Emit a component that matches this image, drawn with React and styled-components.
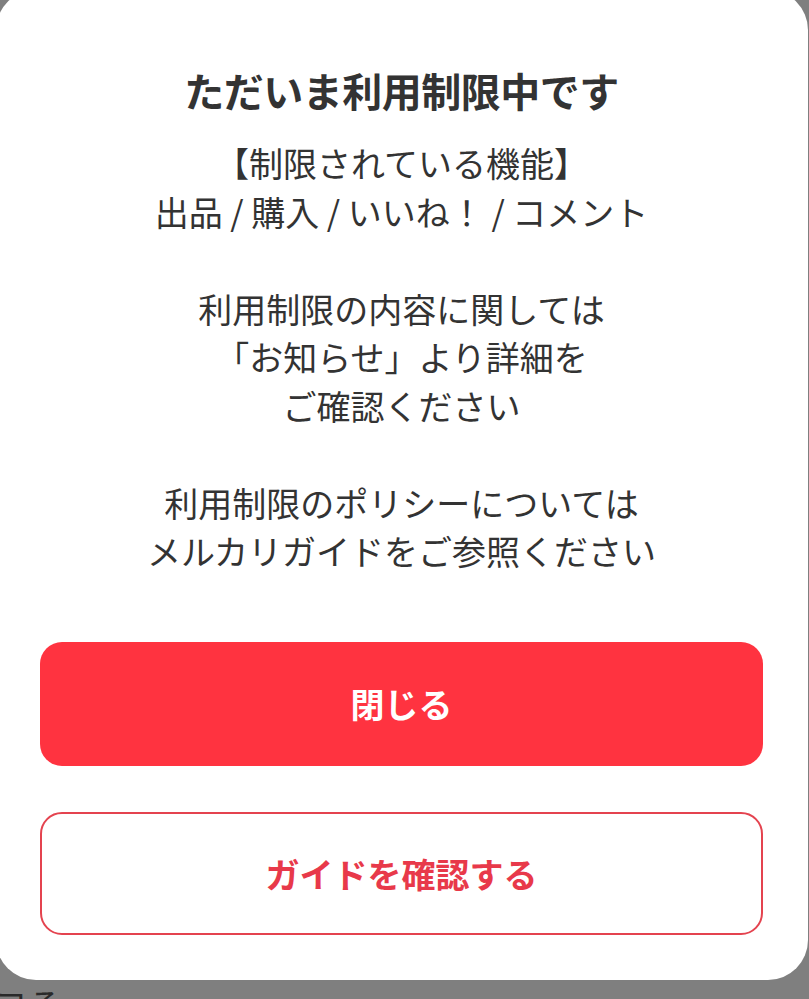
import React from "react";
import styled, { createGlobalStyle } from "styled-components";

const GlobalStyle = createGlobalStyle`
  html, body {
    margin: 0;
    padding: 0;
    height: 999px;
    overflow: hidden;
    background: #7f7f7f;
  }
  body {
    font-family: "Noto Sans CJK JP", "Noto Sans", sans-serif;
  }
`;

const Page = styled.div`
  width: 809px;
  height: 999px;
  overflow: hidden;
`;

const Card = styled.div`
  box-sizing: border-box;
  width: 812px;
  height: 990px;
  margin: -10px 0 0 -4px;
  padding: 72px 45px 0 44px;
  background: #fff;
  border-radius: 40px;
  display: flex;
  flex-direction: column;
  align-items: stretch;
`;

const Title = styled.h1`
  margin: 0;
  font-size: 40px;
  line-height: 56px;
  font-weight: 700;
  color: #333;
  text-align: center;
  letter-spacing: -0.5px;
`;

const Body = styled.div`
  margin-top: 21px;
  display: flex;
  flex-direction: column;
  gap: 48.5px;
`;

const Para = styled.p`
  margin: 0;
  font-size: 34px;
  line-height: 48.5px;
  font-weight: 400;
  color: #333;
  text-align: center;
`;

const Actions = styled.div`
  margin-top: 66px;
  display: flex;
  flex-direction: column;
  gap: 46px;
`;

const Button = styled.button`
  box-sizing: border-box;
  height: ${(p) => (p.$outline ? "123px" : "124px")};
  width: 100%;
  border-radius: 22px;
  font-family: inherit;
  font-size: 34px;
  font-weight: 700;
  cursor: pointer;
  background: ${(p) => (p.$outline ? "#fff" : "#ff3340")};
  color: ${(p) => (p.$outline ? "#e8394a" : "#fff")};
  border: ${(p) => (p.$outline ? "2.5px solid #e4434f" : "none")};
`;

const Behind = styled.div`
  margin: 4px 0 0 -6px;
  font-size: 34px;
  line-height: 40px;
  color: #2a2a2a;
  white-space: nowrap;
`;

export default function App() {
  return (
    <Page>
      <GlobalStyle />
      <Card>
        <Title>ただいま利用制限中です</Title>
        <Body>
          <Para>
            【制限されている機能】
            <br />
            出品 / 購入 / いいね！ / コメント
          </Para>
          <Para>
            利用制限の内容に関しては
            <br />
            「お知らせ」より詳細を
            <br />
            ご確認ください
          </Para>
          <Para>
            利用制限のポリシーについては
            <br />
            メルカリガイドをご参照ください
          </Para>
        </Body>
        <Actions>
          <Button>閉じる</Button>
          <Button $outline>ガイドを確認する</Button>
        </Actions>
      </Card>
      <Behind>ヨる</Behind>
    </Page>
  );
}
